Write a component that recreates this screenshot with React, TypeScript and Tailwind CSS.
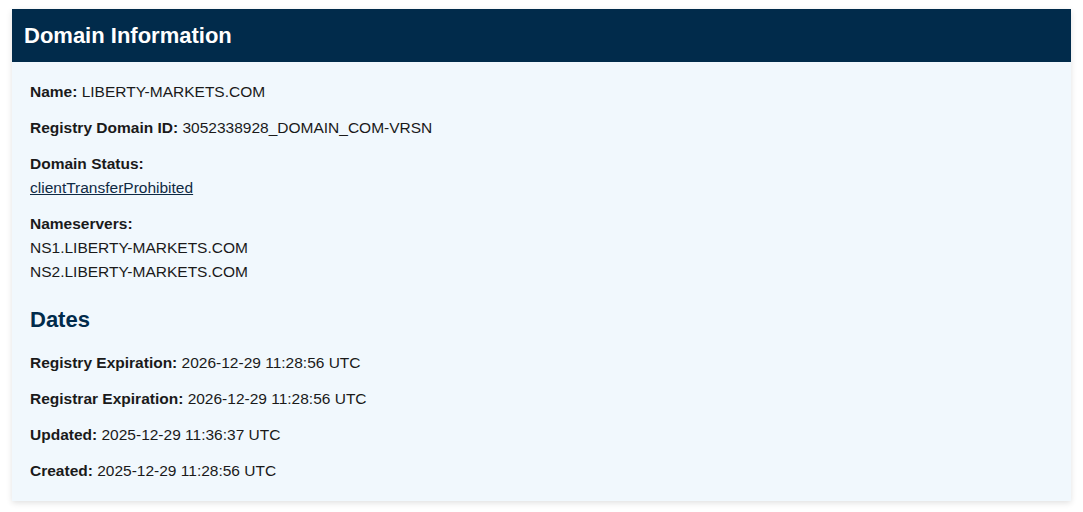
export default function App() {
  const dates = [
    ['Registry Expiration:', '2026-12-29 11:28:56 UTC'],
    ['Registrar Expiration:', '2026-12-29 11:28:56 UTC'],
    ['Updated:', '2025-12-29 11:36:37 UTC'],
    ['Created:', '2025-12-29 11:28:56 UTC'],
  ];
  return (
    <div className="min-h-screen bg-white px-3 pt-[9px] font-['Liberation_Sans',Arial,sans-serif] text-[15.5px] text-[#1a1a1a]">
      <section className="bg-[#f1f8fd] shadow-[0_2px_6px_rgba(0,0,0,0.12)]">
        <h2 className="flex h-[53px] items-center bg-[#012b4b] px-3 text-[22px] font-bold text-white">Domain Information</h2>
        <div className="flex flex-col gap-3 p-[18px] leading-6">
          <p>
            <b>Name:</b> LIBERTY-MARKETS.COM
          </p>
          <p>
            <b>Registry Domain ID:</b> 3052338928_DOMAIN_COM-VRSN
          </p>
          <div>
            <b>Domain Status:</b>
            <div>
              <a href="#" className="text-[#0f2a44] underline">clientTransferProhibited</a>
            </div>
          </div>
          <div>
            <b>Nameservers:</b>
            <div>NS1.LIBERTY-MARKETS.COM</div>
            <div>NS2.LIBERTY-MARKETS.COM</div>
          </div>
          <h3 className="mt-[10px] mb-[5px] text-[22px] font-bold leading-7 text-[#012b4b]">Dates</h3>
          {dates.map(([k, v]) => (
            <p key={k}>
              <b>{k}</b> {v}
            </p>
          ))}
        </div>
      </section>
    </div>
  );
}
